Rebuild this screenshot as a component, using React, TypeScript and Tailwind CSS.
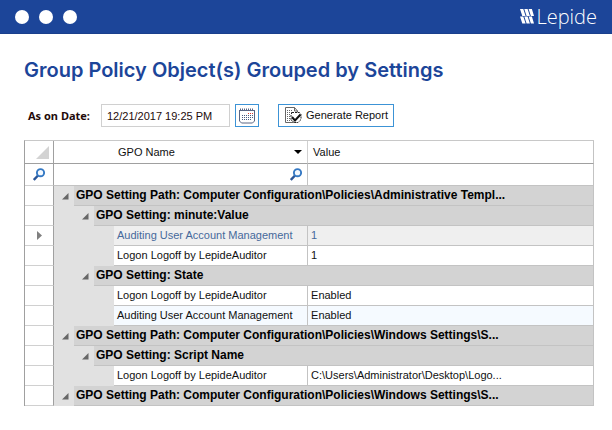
import { Fragment, useState } from "react";

type Setting = { name: string; value: string; look?: "current" | "alt" };
type SettingGroup = { title: string; items: Setting[] };
type PathGroup = { title: string; groups: SettingGroup[] };

const report: PathGroup[] = [
  {
    title: "GPO Setting Path: Computer Configuration\\Policies\\Administrative Templ...",
    groups: [
      {
        title: "GPO Setting: minute:Value",
        items: [
          { name: "Auditing User Account Management", value: "1", look: "current" },
          { name: "Logon Logoff by LepideAuditor", value: "1" },
        ],
      },
      {
        title: "GPO Setting: State",
        items: [
          { name: "Logon Logoff by LepideAuditor", value: "Enabled" },
          { name: "Auditing User Account Management", value: "Enabled", look: "alt" },
        ],
      },
    ],
  },
  {
    title: "GPO Setting Path: Computer Configuration\\Policies\\Windows Settings\\S...",
    groups: [
      {
        title: "GPO Setting: Script Name",
        items: [
          {
            name: "Logon Logoff by LepideAuditor",
            value: "C:\\Users\\Administrator\\Desktop\\Logo...",
          },
        ],
      },
    ],
  },
  {
    title: "GPO Setting Path: Computer Configuration\\Policies\\Windows Settings\\S...",
    groups: [],
  },
];

const rowBg = {
  plain: "bg-white text-[#101010]",
  alt: "bg-[#f5faff] text-[#101010]",
  current: "bg-[#efefef] text-[#46699b]",
};

function LepideMark() {
  return (
    <svg width="14" height="15" viewBox="0 0 14 15" fill="#fff">
      <path d="M0 0h3.300l2.300 7H2.300zM4.300 0h3.300l2.300 7H6.600zM8.600 0h3.300l2.100 7h-3.100z" />
      <path d="M0 7.600h3.300l2.300 7H2.300zM4.300 7.600h3.300l2.300 7H6.600zM8.600 7.600h3.300l2.100 7h-3.100z" />
    </svg>
  );
}

function SearchIcon() {
  return (
    <svg width="12" height="13" viewBox="0 0 12 13" fill="none" className="block">
      <path d="M.8 12l4.200-4.500" stroke="#2a5597" strokeWidth="2.4" />
      <circle cx="7.500" cy="4.700" r="3.600" stroke="#3579c4" strokeWidth="1.900" fill="#f4f9ff" />
    </svg>
  );
}

function CalendarIcon() {
  return (
    <svg width="16" height="16" viewBox="0 0 16 16" fill="none" className="block">
      <path d="M.5 2v11l2 2h11l2-2V2" stroke="#5a6684" />
      <path d="M1 1.500h14" stroke="#5a6684" strokeWidth="2" strokeDasharray="1 1" />
      <path d="M1 2.500h14" stroke="#5a6684" />
      <path d="M9 5.500h5" stroke="#e0392f" strokeDasharray="1 1" />
      <path d="M3 7.500h11M3 9.500h11M3 11.500h9" stroke="#4a5a80" strokeDasharray="1 1" />
    </svg>
  );
}

function ReportIcon() {
  return (
    <svg width="17" height="17" viewBox="0 0 17 17" fill="none" className="block">
      <path d="M9.500 .5H.5v15h12V4l-3-3.500v3.500h3" stroke="#666" />
      <path d="M2 3.500h6M2 5.500h6M2 7.500h4M2 9.500h4M2 11.500h4M2 13.500h7" stroke="#666" strokeDasharray="1 1" />
      <path d="M7 5.500h7.500l1.500 2v5l-3 3h-4l-3-3v-5z" fill="#fff" stroke="#222" strokeDasharray="2 1" />
      <path d="M7 10l3 3.500L15.500 7.500" stroke="#111" strokeWidth="2" />
    </svg>
  );
}

function Toggle({ label, onClick }: { label: string; onClick: () => void }) {
  return (
    <button type="button" aria-label={label} onClick={onClick} className="ml-2 block">
      <svg width="7" height="7" viewBox="0 0 7 7" className="block">
        <path d="M6.500 0v6.500H0z" fill="#666" />
      </svg>
    </button>
  );
}

const selector = "border-r border-b border-r-[#a0a0a0] border-b-[#d0d0d0] bg-white p-0";
const indent = "bg-[#e1e1e1] p-0";
const groupCell =
  "truncate border-r border-b border-[#c3c3c3] bg-[#d3d3d3] p-0 pl-[2px] text-left align-top text-xs leading-[18px] font-bold text-black";
const cell = "truncate border-r border-b border-[#c3c3c3] p-0 pl-[3px] align-top leading-[18px]";

export default function App() {
  const [closed, setClosed] = useState<string[]>([]);
  const toggle = (id: string) =>
    setClosed((c) => (c.includes(id) ? c.filter((x) => x !== id) : [...c, id]));

  return (
    <div className="min-h-screen bg-white font-['Liberation_Sans',sans-serif] text-[11px] text-[#101010]">
      <header className="flex h-[34px] items-center justify-between border-b border-[#1a3f8c] bg-[#1c4599] px-[15px]">
        <div className="flex gap-[10px]">
          <span className="size-[14px] rounded-full bg-white" />
          <span className="size-[14px] rounded-full bg-white" />
          <span className="size-[14px] rounded-full bg-white" />
        </div>
        <div className="flex items-center gap-[2px]">
          <LepideMark />
          <span className="font-['Open_Sans',sans-serif] text-xl leading-8 font-light text-white">Lepide</span>
        </div>
      </header>

      <main className="pt-6 pr-[18px] pl-6">
        <h1 className="font-['Inter',sans-serif] text-xl leading-6 font-semibold text-[#1c4599]">
          Group Policy Object(s) Grouped by Settings
        </h1>

        <form className="mt-[22px] flex items-center pl-1" onSubmit={(e) => e.preventDefault()}>
          <label htmlFor="asOn" className="w-[73px] font-['Noto_Sans',sans-serif] leading-4 font-bold text-[#240a0a]">
            As on Date:
          </label>
          <input
            id="asOn"
            type="text"
            defaultValue="12/21/2017 19:25 PM"
            className="h-[23px] w-[129px] border border-[#d0d0d0] px-[5px] text-[#240a0a]"
          />
          <button
            type="button"
            aria-label="Pick a date"
            className="ml-[5px] flex h-[23px] w-6 items-center justify-center border border-[#3c93d6]"
          >
            <CalendarIcon />
          </button>
          <button
            type="submit"
            className="ml-[19px] flex h-[23px] w-[116px] items-center gap-1 border border-[#3c93d6] pl-[6px]"
          >
            <ReportIcon />
            Generate Report
          </button>
        </form>

        <table className="mt-[13px] w-full table-fixed border-separate border-spacing-0 border-t border-l border-t-[#c8c8c8] border-l-[#a0a0a0] leading-4">
          <colgroup>
            <col className="w-[29px]" />
            <col className="w-5" />
            <col className="w-5" />
            <col className="w-5" />
            <col className="w-[194px]" />
            <col />
          </colgroup>
          <thead>
            <tr className="h-[23px]">
              <td className="border-r border-b border-[#a0a0a0] p-0">
                <svg width="13" height="13" viewBox="0 0 13 13" className="ml-[11px] block">
                  <path d="M13 0v13H0z" fill="#d3d3d3" />
                </svg>
              </td>
              <th colSpan={4} className="border-r border-b border-r-[#d0d0d0] border-b-[#a0a0a0] p-0 pr-[5px] pl-16 font-normal">
                <div className="flex items-center justify-between">
                  GPO Name
                  <svg width="8" height="4" viewBox="0 0 8 4">
                    <path d="M0 0h8L4 4z" fill="#000" />
                  </svg>
                </div>
              </th>
              <th className="border-r border-b border-r-[#c3c3c3] border-b-[#a0a0a0] p-0 pl-[5px] text-left font-normal">
                Value
              </th>
            </tr>
            <tr className="h-[22px]">
              <td className={selector}>
                <div className="ml-2">
                  <SearchIcon />
                </div>
              </td>
              <td colSpan={4} className="border-r border-b border-[#c3c3c3] p-0 pr-[5px]">
                <div className="flex items-center">
                  <input type="text" aria-label="Filter by GPO name" className="h-5 min-w-0 flex-1 px-1 outline-none" />
                  <SearchIcon />
                </div>
              </td>
              <td className="border-r border-b border-[#c3c3c3] p-0">
                <input type="text" aria-label="Filter by value" className="block h-5 w-full px-1 outline-none" />
              </td>
            </tr>
          </thead>
          <tbody>
            {report.map((path, p) => (
              <Fragment key={p}>
                <tr className="h-5">
                  <td className={selector} />
                  <td className={indent}>
                    <Toggle label="Toggle setting path" onClick={() => toggle(`${p}`)} />
                  </td>
                  <th colSpan={4} className={groupCell}>{path.title}</th>
                </tr>
                {!closed.includes(`${p}`) &&
                  path.groups.map((group, g) => (
                    <Fragment key={g}>
                      <tr className="h-5">
                        <td className={selector} />
                        <td className={indent} />
                        <td className={indent}>
                          <Toggle label="Toggle setting" onClick={() => toggle(`${p}-${g}`)} />
                        </td>
                        <th colSpan={3} className={groupCell}>{group.title}</th>
                      </tr>
                      {!closed.includes(`${p}-${g}`) &&
                        group.items.map((item, i) => (
                          <tr key={i} className="h-5">
                            <td className={selector}>
                              {item.look === "current" && (
                                <svg width="5" height="9" viewBox="0 0 5 9" className="ml-3 block">
                                  <path d="M0 0l5 4.500L0 9z" fill="#808080" />
                                </svg>
                              )}
                            </td>
                            <td className={indent} />
                            <td className={indent} />
                            <td className={indent} />
                            <td className={`${cell} ${rowBg[item.look ?? "plain"]}`}>{item.name}</td>
                            <td className={`${cell} ${rowBg[item.look ?? "plain"]}`}>{item.value}</td>
                          </tr>
                        ))}
                    </Fragment>
                  ))}
              </Fragment>
            ))}
          </tbody>
        </table>
      </main>
    </div>
  );
}
